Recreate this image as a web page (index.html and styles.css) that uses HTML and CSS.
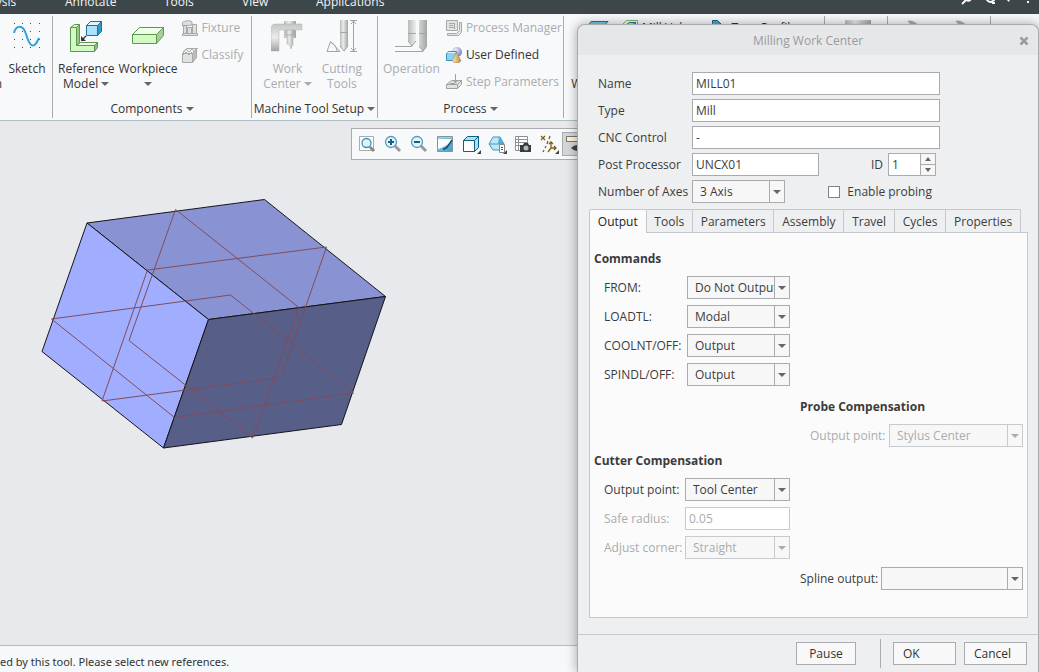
FILE: index.html
```html
<!DOCTYPE html>
<html lang="en">
<head>
<meta charset="utf-8">
<title>Milling Work Center</title>
<link rel="stylesheet" href="styles.css">
</head>
<body>
<svg class="defs" aria-hidden="true">
  <defs>
    <linearGradient id="steel" x1="0" x2="1" y1="0" y2="0">
      <stop offset="0" stop-color="#b9baba"/><stop offset=".4" stop-color="#ececec"/><stop offset="1" stop-color="#a2a3a3"/>
    </linearGradient>
    <linearGradient id="steelv" x1="0" x2="0" y1="0" y2="1">
      <stop offset="0" stop-color="#c4c5c5"/><stop offset=".5" stop-color="#ececec"/><stop offset="1" stop-color="#a2a3a3"/>
    </linearGradient>
    <linearGradient id="gold" x1="0" x2="1" y1="0" y2="0">
      <stop offset="0" stop-color="#fff0bf"/><stop offset="1" stop-color="#b98a3e"/>
    </linearGradient>
    <radialGradient id="ball" cx=".35" cy=".3" r=".8">
      <stop offset="0" stop-color="#eef2ff"/><stop offset="1" stop-color="#6776c4"/>
    </radialGradient>
    <linearGradient id="sky" x1="0" x2="1" y1="0" y2="1">
      <stop offset="0" stop-color="#9fd3ea"/><stop offset="1" stop-color="#3f9dc6"/>
    </linearGradient>
  </defs>
</svg>
<div class="app">
  <nav class="menu">
    <a class="menu-analysis" href="#">Analysis</a>
    <a class="menu-annotate" href="#">Annotate</a>
    <a class="menu-tools" href="#">Tools</a>
    <a class="menu-view" href="#">View</a>
    <a class="menu-apps" href="#">Applications</a>
    <svg class="menu-icons" width="79" height="14" viewBox="0 0 79 14" aria-hidden="true">
      <path d="M2 4l5-5" stroke="#f5f7f8" stroke-width="2"/>
      <path d="M6 0q3 2 5-1" fill="none" stroke="#f5f7f8" stroke-width="2"/>
      <path d="M27-2v2q3 4 7 0v-2M32 3h3" fill="none" stroke="#f5f7f8" stroke-width="2"/>
      <path d="M47 0h3l-1.500 2zM67 1h2v2h-2z" fill="#f5f7f8"/>
    </svg>
  </nav>

  <header class="ribbon">
    <section class="group group-datum">
      <div class="tools">
        <span class="cut"><span>Plan</span></span>
        <button class="big" type="button">
          <svg width="32" height="32" viewBox="0 0 32 32"><path d="M3 3.500h1M11 3.500h1M19 3.500h1M28 3.500h1M3 11.500h1M11 11.500h1M19 11.500h1M28 11.500h1M3 19.500h1M11 19.500h1M19 19.500h1M28 19.500h1M3 27.500h1M11 27.500h1M19 27.500h1M28 27.500h1" stroke="#4b4b4b"/><path d="M3 13C5 5 12 4 15 14S22 32 28 18" fill="none" stroke="#2fa4d8" stroke-width="2"/></svg>
          <span>Sketch</span>
        </button>
      </div>
    </section>
    <section class="group group-components">
      <div class="tools">
        <button class="big" type="button">
          <svg width="32" height="32" viewBox="0 0 32 32"><g stroke="#5b9a4d" stroke-linejoin="round"><path d="M.5 7.500l4-3h5l-3 3v18h-6z" fill="#d3f5c4"/><path d="M6.500 7.500l3-3v18l-3 3z" fill="#9bc88a"/><path d="M.5 7.500h6v18h18v6H.5z" fill="#d3f9c4"/><path d="M6.500 25.500l4-3h17l-3 3z" fill="#efffe8"/><path d="M24.500 25.500l3-3v5l-3 4z" fill="#8dbb7d"/></g><g stroke="#1d7296"><path d="M16.500 5.500h11v10h-11z" fill="#a9e4fa"/><path d="M16.500 5.500l4-4h11l-4 4z" fill="#dff6ff"/><path d="M27.500 5.500l4-4v10l-4 4z" fill="#349ac3"/></g><path d="M16 16l-4 4" stroke="#444" stroke-width="1.500"/><path d="M11 16v5h5z" fill="#333"/></svg>
          <span>Reference<br>Model <i class="caret"></i></span>
        </button>
        <button class="big" type="button">
          <svg width="32" height="32" viewBox="0 0 32 32"><g stroke="#5b9a4d" stroke-linejoin="round"><path d="M.5 14.500h24v9H.5z" fill="#d3f9c4"/><path d="M.5 14.500l7-7h24l-7 7z" fill="#efffe8"/><path d="M24.500 14.500l7-7v8l-7 8z" fill="#a8cf99"/></g></svg>
          <span>Workpiece<br><i class="caret"></i></span>
        </button>
        <div class="list">
          <button class="small" type="button" disabled>
            <svg width="16" height="16" viewBox="0 0 16 16"><g fill="#dedfdf" stroke="#a7a8a8"><path d="M.5 13.500h15v2H.5zM1.500 5.500h3v8h-3zM5.500 7.500h4v6h-4zM10.500 4.500h4v9h-4zM.5 2.500C3 .5 8 0 10 2v3L.5 6z"/></g></svg>
            Fixture
          </button>
          <button class="small" type="button" disabled>
            <svg width="16" height="16" viewBox="0 0 16 16"><g stroke="#a7a8a8"><path d="M.5 6.500h10v9H.5z" fill="#e0e1e1"/><path d="M.5 6.500l4-5h11l-5 5z" fill="#f4f4f4"/><path d="M10.500 6.500l4-5v9l-4 5z" fill="#bcbdbd"/><path d="M1 5l3-3 3 3 3-3 3 3M1 8l3-3 3 3 3-3" fill="none"/></g></svg>
            Classify
          </button>
        </div>
      </div>
      <button class="group-name" type="button">Components <i class="caret"></i></button>
    </section>
    <section class="group group-machine">
      <div class="tools">
        <button class="big" type="button" disabled>
          <svg width="32" height="32" viewBox="0 0 32 32"><path d="M13 1h12v17H13z" fill="url(#steel)"/><path d="M0 31V9q0-5 5-5h26v6H8v21z" fill="url(#steelv)" stroke="#b0b1b1" stroke-width=".5"/><path d="M15 10h8v5h-8zM16 15h6v9l-2 5-2-5h-2z" fill="url(#steel)" stroke="#aaa" stroke-width=".5"/></svg>
          <span>Work<br>Center <i class="caret"></i></span>
        </button>
        <button class="big" type="button" disabled>
          <svg width="32" height="32" viewBox="0 0 32 32"><path d="M14 0h8v26l-4 6-4-6z" fill="url(#steel)"/><g fill="none" stroke="#a3a4a4"><path d="M14 12.500h8M14 26l4 5 4-5M1 31.500h13L4.500 21.500zM4 22q6 2 7 9M24 .5h7M24 31.500h7M27.500 1v30M25 4l2.500-3L30 4M25 28l2.500 3 2.500-3"/></g></svg>
          <span>Cutting<br>Tools</span>
        </button>
      </div>
      <button class="group-name" type="button">Machine Tool Setup <i class="caret"></i></button>
    </section>
    <section class="group group-process">
      <div class="tools">
        <button class="big" type="button" disabled>
          <svg width="32" height="32" viewBox="0 0 32 32"><path d="M13 0h8v21l-4 5-4-5zM24 0h8v26l-4 6-4-6z" fill="url(#steel)"/><path d="M0 26.500h17M0 31.500h28M13 13.500h8M24 13.500h8M13 21l4 5 4-5M24 26l4 5 4-5" fill="none" stroke="#a3a4a4"/></svg>
          <span>Operation</span>
        </button>
        <div class="list">
          <button class="small" type="button" disabled>
            <svg width="16" height="16" viewBox="0 0 16 16"><g fill="#e1e2e2" stroke="#a7a8a8"><path d="M.5.500h11v10H.5zM13.500 2.500h2v10l-3 3h-11v-2h9l3-3z"/><path d="M3 3.500h6M3 5.500h4M3 7.500h6M8.500 3v6" fill="none"/></g></svg>
            Process Manager
          </button>
          <button class="small" type="button">
            <svg width="16" height="16" viewBox="0 0 16 16"><circle cx="11" cy="5" r="5" fill="url(#ball)"/><path d="M.5 6.500l2-2h8v7l-2 2h-8z" fill="#8bd3f2" stroke="#3391bd"/><path d="M1 6h7l2-1H3z" fill="#e5f8ff"/><path d="M10.500 5L15 14q-4 4-9 0z" fill="url(#gold)" stroke="#9d8255" stroke-width=".6"/></svg>
            User Defined
          </button>
          <button class="small" type="button" disabled>
            <svg width="16" height="16" viewBox="0 0 16 16"><g fill="#e1e2e2" stroke="#a0a1a1"><path d="M.5 10.500l5-4h10l-4 4z"/><path d="M.5 10.500h11v4H.5zM11.500 10.500l4-4v4l-4 4z"/><path d="M9.500 0v8M7 6l2.500 3L12 6M4 9.500h5" fill="none"/></g></svg>
            Step Parameters
          </button>
        </div>
      </div>
      <button class="group-name" type="button">Process <i class="caret"></i></button>
    </section>
    <section class="group group-geometry">
      <div class="tools">
        <button class="big" type="button">
          <svg width="32" height="32" viewBox="0 0 32 32"><path d="M8 9l5-7.500h17L23 9z" fill="#79c7ea" stroke="#1d7296"/><path d="M.5 12.500h20v14H.5z" fill="#d3f9c4" stroke="#5b9a4d"/></svg>
          <span>Mill<br>Window</span>
        </button>
        <div class="list">
          <button class="small" type="button">
            <svg width="16" height="16" viewBox="0 0 16 16"><path d="M.5 4.500l4-4h11v11l-4 4H.5z" fill="#efffe8" stroke="#7db469"/><path d="M4.500 4.500l3-2h6v6l-3 3h-6zM10.500 12V5l3-3" fill="#a9e4fa" stroke="#1d7296"/></svg>
            Mill Volume
          </button>
        </div>
        <div class="list">
          <button class="small" type="button">
            <svg width="16" height="16" viewBox="0 0 16 16"><path d="M.5.500h5l5 5v10H.5z" fill="#49aad0" stroke="#1d5f80"/><path d="M1 3q5 0 6 12H1z" fill="#c8c9c9" stroke="#999"/></svg>
            Turn Profile
          </button>
        </div>
      </div>
    </section>
    <section class="group group-milling">
      <div class="tools">
        <button class="big" type="button" disabled aria-label="Milling">
          <svg width="32" height="32" viewBox="0 0 32 32"><path d="M5 0h9v26H5zM14 0h8v26h-8zM22 0h9v26h-9z" fill="url(#steel)"/></svg>
        </button>
      </div>
    </section>
    <section class="group group-hole">
      <div class="tools">
        <button class="big" type="button" disabled aria-label="Drilling">
          <svg width="32" height="32" viewBox="0 0 32 32"><path d="M8 1q6-2 11 4v8h-5Q13 4 8 1z" fill="#acadad"/></svg>
        </button>
        <button class="big" type="button" disabled aria-label="Tapping">
          <svg width="32" height="32" viewBox="0 0 32 32"><path d="M8 1q6-2 11 4v8h-5Q13 4 8 1z" fill="#acadad"/></svg>
        </button>
      </div>
    </section>
  </header>

  <main class="canvas">
    <svg class="model" width="346" height="252" viewBox="41 198 346 252" role="img" aria-label="Workpiece model">
      <g stroke="#151518" stroke-linejoin="round">
        <path d="M87 223L264.500 199.500 385.500 296.500 208.500 319.500z" fill="#8993d3"/>
        <path d="M87 223L208.500 319.500 163.500 448 42 351.500z" fill="#a1aeff"/>
        <path d="M208.500 319.500L385.500 296.500 341.500 424.500 163.500 448z" fill="#575e87"/>
      </g>
      <g fill="none" stroke="#804c5a">
        <path d="M175.500 209.500L299 307.500 252.500 438 129 340.500z"/>
        <path d="M147.500 270L326.500 247 281 377.500 102 401z"/>
        <path d="M51.500 319L230.500 295 353.500 393 174.500 417.500z"/>
      </g>
    </svg>
    <div class="view-bar" role="toolbar" aria-label="Graphics">
      <button type="button" aria-label="Refit"><svg width="20" height="20" viewBox="0 0 20 20"><path d="M2.500 2.500h14v14h-14z" fill="#fff" stroke="#a8adb0"/><path d="M13 13l4 4" stroke="#888" stroke-width="3"/><circle cx="9.500" cy="9" r="4.500" fill="#dff2fa" stroke="#3f8fb3" stroke-width="1.300"/></svg></button>
      <button type="button" aria-label="Zoom in"><svg width="20" height="20" viewBox="0 0 20 20"><path d="M12 12l5 5" stroke="#999" stroke-width="3"/><circle cx="8" cy="8" r="5.500" fill="#e3f5fc" stroke="#4c9abc" stroke-width="1.300"/><path d="M5 8h6M8 5v6" stroke="#17617f" stroke-width="2"/></svg></button>
      <button type="button" aria-label="Zoom out"><svg width="20" height="20" viewBox="0 0 20 20"><path d="M12 12l5 5" stroke="#999" stroke-width="3"/><circle cx="8" cy="8" r="5.500" fill="#e3f5fc" stroke="#4c9abc" stroke-width="1.300"/><path d="M5 8h6" stroke="#17617f" stroke-width="2"/></svg></button>
      <button type="button" aria-label="Repaint"><svg width="20" height="20" viewBox="0 0 20 20"><path d="M2.500 2.500h15v15h-15z" fill="url(#sky)" stroke="#8a9398"/><path d="M3 5h14q-2 5-7 7-3 2-7 3z" fill="#fafdfe"/><path d="M8 15q3 0 5-3l4-6" fill="none" stroke="#174e68" stroke-width="1.500"/><path d="M3 3h14v1H3z" fill="#b8c4ca"/></svg></button>
      <button type="button" aria-label="Display style"><svg width="20" height="20" viewBox="0 0 20 20"><g stroke="#125f83" stroke-linejoin="round"><path d="M2.500 6.500h11v11h-11z" fill="#fff"/><path d="M2.500 6.500l4-4h11l-4 4z" fill="#a4e3f6"/><path d="M13.500 6.500l4-4v11l-4 4z" fill="#a4e3f6"/></g><path d="M20 16v4h-4z" fill="#444"/></svg></button>
      <button type="button" aria-label="Saved orientations"><svg width="20" height="20" viewBox="0 0 20 20"><path d="M6 3h7l4 7-4 6H6l-4-6z" fill="#bfe7f6" stroke="#3a9cc5"/><path d="M12 2L17 10h-6z" fill="#50afd5"/><path d="M2 10h15" stroke="#4b9abb"/><path d="M12.500 10.500h5v8h-5z" fill="#fff" stroke="#888"/><path d="M14 13.500h2M14 15.500h2" stroke="#555"/><path d="M20 16v4h-4z" fill="#444"/></svg></button>
      <button type="button" aria-label="View manager"><svg width="20" height="20" viewBox="0 0 20 20"><path d="M2.500 2.500h12v14h-12zM2.500 5.500h12M2.500 8.500h12M2.500 11.500h12M5.500 2.500v14" fill="#fff" stroke="#8d8f90"/><path d="M7 11h3l1-2h4l1 2h2v7H7z" fill="#333d42"/><circle cx="13" cy="14" r="2.500" fill="#aeb8bd"/></svg></button>
      <button type="button" aria-label="Datum display"><svg width="20" height="20" viewBox="0 0 20 20"><path d="M2 2l4 4M6 2L2 6M11 2l-1 3M9 7l-1 3M7 12l-1 2M5 16l-1 2M12 8v6h5M12 14l-3 4M10 10l2-2 2 2M15 12l2 2-2 2" fill="none" stroke="#806018" stroke-width="1.300"/><path d="M20 16v4h-4z" fill="#444"/></svg></button>
      <button class="pressed" type="button" aria-label="Annotation display"><svg width="20" height="20" viewBox="0 0 20 20"><path d="M1.500 2.500h15v5h-15z" fill="#fff5da" stroke="#77736c"/><path d="M6 14q6-6 12 0-6 6-12 0z" fill="#444"/></svg></button>
    </div>
  </main>
  <footer class="status">ed by this tool. Please select new references.</footer>
</div>

<form class="dialog" role="dialog" aria-labelledby="dialog-title">
  <div class="title-bar">
    <h1 id="dialog-title">Milling Work Center</h1>
    <button class="close" type="button" aria-label="Close"><svg width="10" height="10" viewBox="0 0 10 10"><path d="M1.500 1.500l7 7M8.500 1.500l-7 7" stroke="#999b9c" stroke-width="2.500"/></svg></button>
  </div>
  <div class="fields">
    <label for="name">Name</label>
    <div class="field"><input class="text" id="name" type="text" value="MILL01"></div>
    <label for="type">Type</label>
    <div class="field"><input class="text" id="type" type="text" value="Mill"></div>
    <label for="cnc">CNC Control</label>
    <div class="field"><input class="text" id="cnc" type="text" value="-"></div>
    <label for="post">Post Processor</label>
    <div class="field field-split">
      <input class="text post" id="post" type="text" value="UNCX01">
      <div class="id-field">
        <label for="id">ID</label>
        <span class="spinner">
          <input id="id" type="number" value="1">
          <span class="steps">
            <button type="button" aria-label="Increase"><i class="up"></i></button>
            <button type="button" aria-label="Decrease"><i class="down"></i></button>
          </span>
        </span>
      </div>
    </div>
    <label for="axes">Number of Axes</label>
    <div class="field field-split">
      <span class="select axes"><select id="axes"><option>3 Axis</option></select></span>
      <label class="check"><input type="checkbox">Enable probing</label>
    </div>
  </div>

  <div class="tabs" role="tablist">
    <button class="active" type="button" role="tab" aria-selected="true">Output</button>
    <button type="button" role="tab">Tools</button>
    <button type="button" role="tab">Parameters</button>
    <button type="button" role="tab">Assembly</button>
    <button type="button" role="tab">Travel</button>
    <button type="button" role="tab">Cycles</button>
    <button type="button" role="tab">Properties</button>
  </div>
  <div class="panel" role="tabpanel">
    <section class="commands">
      <h2>Commands</h2>
      <div class="rows">
        <label for="from">FROM:</label>
        <span class="select"><select id="from"><option>Do Not Output</option></select></span>
        <label for="loadtl">LOADTL:</label>
        <span class="select"><select id="loadtl"><option>Modal</option></select></span>
        <label for="coolnt">COOLNT/OFF:</label>
        <span class="select"><select id="coolnt"><option>Output</option></select></span>
        <label for="spindl">SPINDL/OFF:</label>
        <span class="select"><select id="spindl"><option>Output</option></select></span>
      </div>
    </section>
    <section class="probe">
      <h2>Probe Compensation</h2>
      <div class="rows">
        <label class="off" for="probe-point">Output point:</label>
        <span class="select off"><select id="probe-point" disabled><option>Stylus Center</option></select></span>
      </div>
    </section>
    <section class="cutter">
      <h2>Cutter Compensation</h2>
      <div class="rows">
        <label for="cutter-point">Output point:</label>
        <span class="select"><select id="cutter-point"><option>Tool Center</option></select></span>
        <label class="off" for="radius">Safe radius:</label>
        <input class="text" id="radius" type="text" value="0.05" disabled>
        <label class="off" for="corner">Adjust corner:</label>
        <span class="select off"><select id="corner" disabled><option>Straight</option></select></span>
      </div>
    </section>
    <div class="spline">
      <label for="spline">Spline output:</label>
      <span class="select"><select id="spline"><option></option></select></span>
    </div>
  </div>
  <div class="actions">
    <button class="action pause" type="button">Pause</button>
    <span class="rule"></span>
    <button class="action" type="button">OK</button>
    <button class="action" type="button">Cancel</button>
  </div>
</form>
</body>
</html>
```

FILE: styles.css
```css
* { box-sizing: border-box; }

body {
  margin: 0;
  font: 12px/16px "Open Sans", "Noto Sans", sans-serif;
  color: #333;
  overflow: hidden;
}

button, input, select { font: inherit; color: inherit; margin: 0; }
button { padding: 0; border: 0; background: none; }
h1, h2 { margin: 0; font-size: 12px; }
.defs { position: absolute; width: 0; height: 0; }

.app { display: flex; flex-direction: column; height: 100vh; }

/* Menu */
.menu {
  flex: none;
  display: flex;
  align-items: flex-end;
  height: 14px;
  padding-bottom: 4px;
  background: #3d4749;
  overflow: hidden;
}
.menu a { flex: none; color: #f2f5f6; text-decoration: none; }
.menu-analysis { width: 65px; margin-left: -29px; }
.menu-annotate { margin-left: 29px; width: 99px; }
.menu-tools { width: 78px; }
.menu-view { width: 74px; }
.menu-icons { margin: 0 0 -4px auto; }

/* Ribbon */
.ribbon {
  flex: none;
  display: flex;
  height: 107px;
  padding: 2px 0;
  background: #f8f9fb;
  border-bottom: 1px solid #aebfc3;
  overflow: hidden;
}
.group {
  flex: none;
  display: flex;
  flex-direction: column;
  justify-content: space-between;
  border-right: 1px solid #a9abae;
}
.group-datum { width: 53px; }
.group-components { width: 199px; }
.group-machine { width: 126px; }
.group-process { width: 186px; }
.group-geometry { width: 261px; }
.group-milling { width: 63px; }
.group-hole { width: 103px; }

.tools { display: flex; justify-content: center; }
.group-datum .tools { justify-content: flex-start; }
.group-components .tools, .group-process .tools, .group-geometry .tools { justify-content: flex-start; padding-left: 5px; }
.group-geometry .tools { padding-left: 6px; }
.cut { flex: none; display: flex; justify-content: flex-end; width: 2px; margin-right: 5px; padding-top: 60px; overflow: hidden; }
.big {
  flex: none;
  display: flex;
  flex-direction: column;
  align-items: center;
  gap: 9px;
  min-width: 48px;
  padding-top: 4px;
  line-height: 15px;
}
.group-datum .big { min-width: 40px; }
.group-components .tools { gap: 4px; }
.group-machine .tools { gap: 6px; }
.list { display: flex; flex-direction: column; gap: 3px; margin-left: 6px; }
.group-components .list { margin-left: 0; }
.group-geometry .list { margin-left: 4px; }
.small { display: flex; align-items: center; gap: 4px; height: 24px; white-space: nowrap; }
.big:disabled, .small:disabled { color: #aaacad; }
.group-name { align-self: center; height: 18px; white-space: nowrap; }
.caret {
  display: inline-block;
  border: 4px solid transparent;
  border-top-color: #666;
  border-bottom: 0;
  vertical-align: 2px;
}
:disabled .caret { border-top-color: #aaacad; }

/* Graphics area */
.canvas { position: relative; flex: 1; min-height: 0; background: #e8e9ed; overflow: hidden; }
.model { display: block; margin: 77px 0 0 41px; }
.view-bar {
  position: absolute;
  top: 7px;
  left: 351px;
  display: flex;
  align-items: center;
  height: 32px;
  padding: 0 2px;
  background: #f8f9fb;
  border: 1px solid #a9abae;
}
.view-bar button { display: grid; place-items: center; width: 26px; height: 24px; }
.view-bar .pressed { background: #d4d6d8; border: 1px solid #a9abae; }

.status {
  flex: none;
  height: 27px;
  padding-top: 8px;
  border-top: 1px solid #b0bec3;
  background: #f6f9fb;
  font-family: "Noto Sans", "Open Sans", sans-serif;
  font-size: 11px;
  white-space: nowrap;
}

/* Dialog */
.dialog {
  position: absolute;
  top: 24px;
  right: 0;
  bottom: 0;
  display: flex;
  flex-direction: column;
  width: 462px;
  background: #eeeff1;
  border: 1px solid #a9abae;
  border-bottom: 0;
  border-radius: 8px 8px 0 0;
  box-shadow: 0 0 12px rgba(0, 0, 0, .35);
  color: #3c3c3c;
}
.title-bar {
  display: flex;
  align-items: center;
  height: 30px;
  padding: 2px 8px 0 20px;
  background: #e6e7e9;
  border-radius: 8px 8px 0 0;
}
.title-bar h1 { flex: 1; font-weight: 400; text-align: center; color: #999b9c; }
.close { display: grid; place-items: center; width: 12px; height: 16px; }

.fields {
  display: grid;
  grid-template-columns: 94px 1fr;
  align-items: center;
  row-gap: 4px;
  padding: 17px 98px 6px 20px;
}
.fields label { white-space: nowrap; }
.field { display: flex; align-items: center; }
.text {
  width: 100%;
  height: 23px;
  padding: 0 3px;
  border: 1px solid #a9abae;
  border-radius: 0;
  background: #fff;
}
.text:disabled { color: #aaacad; border-color: #c8cbce; }
.field-split { justify-content: space-between; padding-right: 4px; }
.post { width: 127px; }
.id-field { display: flex; align-items: center; gap: 5px; }
.spinner { display: flex; width: 48px; height: 23px; border: 1px solid #a9abae; background: #fff; }
.spinner input { flex: 1; min-width: 0; padding: 0 3px; border: 0; background: none; appearance: textfield; }
.spinner input::-webkit-inner-spin-button { display: none; }
.steps { display: grid; width: 15px; border-left: 1px solid #a9abae; background: #f6f6f7; }
.steps button { display: grid; place-items: center; }
.steps button + button { border-top: 1px solid #a9abae; }
.up, .down { border: 3px solid transparent; }
.up { border-bottom: 4px solid #666; border-top: 0; }
.down { border-top: 4px solid #666; border-bottom: 0; }

.select { display: grid; grid-template-columns: 1fr 14px; height: 23px; border: 1px solid #a9abae; background: #f7f7f8; }
.select::after {
  content: "";
  grid-area: 1 / 2;
  place-self: center;
  border: 4px solid transparent;
  border-top-color: #666;
  border-bottom: 0;
  pointer-events: none;
}
.select select {
  grid-area: 1 / 1 / 2 / 3;
  min-width: 0;
  padding: 0 15px 0 7px;
  border: 0;
  border-radius: 0;
  background: linear-gradient(#a9abae, #a9abae) right 14px top / 1px 100% no-repeat;
  appearance: none;
}
.select.off { border-color: #c8cbce; color: #aaacad; }
.select.off select { opacity: 1; background-image: linear-gradient(#c8cbce, #c8cbce); }
.select.off::after { border-top-color: #aaacad; }
.off { color: #aaacad; }
.axes { width: 93px; }
.check { display: flex; align-items: center; gap: 7px; padding-right: 4px; }
.check input { appearance: none; width: 12px; height: 12px; border: 1px solid #808284; background: #fff; }

.tabs { display: flex; flex: none; height: 23px; margin: 0 17px 0 11px; }
.tabs button { flex: 1 1 auto; padding: 1px 7px 0; border-top: 1px solid #c4c9cd; border-right: 1px solid #c4c9cd; }
.tabs .active {
  position: relative;
  height: 24px;
  color: #222;
  background: #fbfbfb;
  border-left: 1px solid #c4c9cd;
  border-radius: 2px 2px 0 0;
}

.panel {
  flex: 1;
  display: flex;
  flex-direction: column;
  margin: 0 10px 16px 11px;
  padding: 17px 4px 0;
  background: #fbfbfb;
  border: 1px solid #c4c9cd;
}
.panel h2 { line-height: 18px; margin-bottom: 8px; }
.rows { display: grid; align-items: center; row-gap: 6px; padding-left: 10px; }
.rows label, .spline label { white-space: nowrap; }
.commands { width: 196px; margin-bottom: 12px; }
.commands .rows { grid-template-columns: 83px 1fr; }
.probe { align-self: flex-end; width: 223px; margin-bottom: 5px; }
.probe .rows { grid-template-columns: 79px 1fr; }
.cutter { width: 196px; margin-bottom: 8px; }
.cutter .rows { grid-template-columns: 81px 1fr; }
.spline { display: grid; grid-template-columns: 81px 1fr; align-items: center; align-self: flex-end; width: 223px; }

.actions {
  display: flex;
  align-items: center;
  justify-content: flex-end;
  gap: 8px;
  height: 38px;
  padding-right: 11px;
  border-top: 1px solid #c8c9cb;
}
.action { width: 63px; height: 23px; padding: 0 9px; border: 1px solid #a9abae; background: #f8f8f9; color: #333; text-align: left; }
.pause { width: 60px; text-align: center; }
.rule { width: 1px; height: 29px; margin: 0 4px 0 16px; background: #a9abae; }
```
